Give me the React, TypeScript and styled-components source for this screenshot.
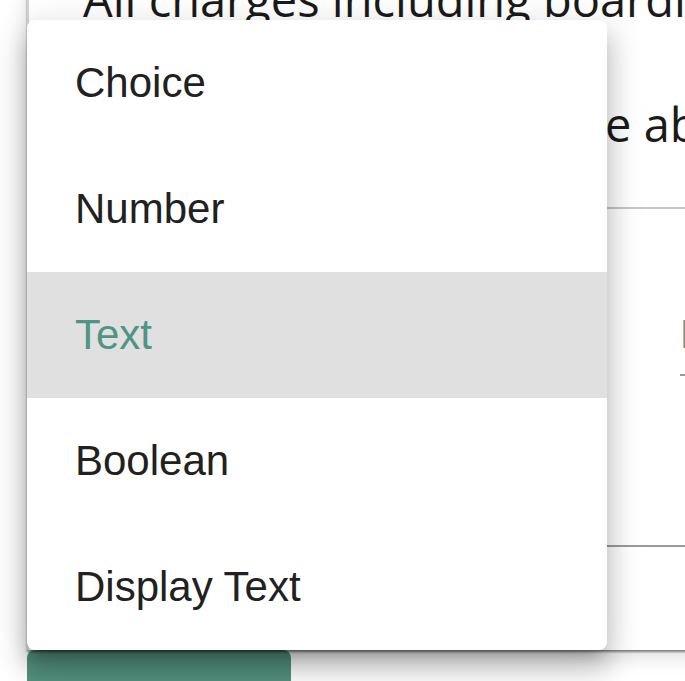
import React from "react";
import styled, { createGlobalStyle } from "styled-components";

const GlobalStyle = createGlobalStyle`
  html, body {
    margin: 0;
    padding: 0;
    background: #ffffff;
    overflow: hidden;
  }
  * { box-sizing: border-box; }
`;

const Page = styled.div`
  position: relative;
  width: 685px;
  height: 681px;
  overflow: hidden;
  background: #ffffff;
  font-family: "Liberation Sans", Arial, sans-serif;
`;

const Card = styled.section`
  position: relative;
  z-index: 1;
  margin: -63px 0 0 27px;
  width: 720px;
  padding-bottom: 103px;
  background: #ffffff;
  border-left: 2px solid #d2d2d2;
  box-shadow: 0 2px 2px rgba(0, 0, 0, 0.45), 0 8px 18px rgba(0, 0, 0, 0.12);
`;

const Notes = styled.div`
  padding-left: 54px;
  font-family: "Open Sans", "Noto Sans", sans-serif;
  font-size: 47px;
  line-height: 125px;
  color: #1a1a1a;
  white-space: nowrap;
`;

const NoteLine = styled.p`
  margin: 0;
`;

const Field = styled.div`
  margin-top: 20px;
  height: 340px;
  padding: 101px 0 0 651px;
  border-top: 2px solid #c6c6c6;
  border-bottom: 2px solid #9a9a9a;
`;

const FieldLabel = styled.div`
  font-size: 41px;
  line-height: 48px;
  color: #8a8a8a;
  white-space: nowrap;
`;

const FieldUnderline = styled.div`
  margin-top: 16px;
  width: 60px;
  height: 2px;
  background: #9a9a9a;
`;

const Actions = styled.div`
  display: flex;
  padding-left: 27px;
`;

const PrimaryButton = styled.button`
  width: 264px;
  height: 60px;
  border: none;
  border-radius: 8px;
  background: #54917f;
`;

const Menu = styled.ul`
  position: absolute;
  z-index: 10;
  left: 27px;
  top: 20px;
  width: 580px;
  margin: 0;
  padding: 0;
  list-style: none;
  background: #ffffff;
  border-radius: 8px;
  overflow: hidden;
  box-shadow: 0 12px 12px -8px rgba(0, 0, 0, 0.2),
    0 20px 25px 3px rgba(0, 0, 0, 0.14), 0 8px 35px 5px rgba(0, 0, 0, 0.12);
`;

const MenuItem = styled.li<{ $selected?: boolean }>`
  display: flex;
  align-items: center;
  height: 126px;
  padding-left: 48px;
  font-family: "Liberation Sans", Arial, sans-serif;
  font-size: 42px;
  color: ${(p) => (p.$selected ? "#4f9484" : "#212121")};
  background: ${(p) => (p.$selected ? "#e0e0e0" : "transparent")};
`;

const options = ["Choice", "Number", "Text", "Boolean", "Display Text"];

export default function App() {
  return (
    <Page>
      <GlobalStyle />
      <Card>
        <Notes>
          <NoteLine>All charges including boarding are payable in advance.</NoteLine>
          <NoteLine>Charges are stated in the above table.</NoteLine>
        </Notes>
        <Field>
          <FieldLabel>Prompt</FieldLabel>
          <FieldUnderline />
        </Field>
      </Card>
      <Actions>
        <PrimaryButton type="button" aria-label="Save" />
      </Actions>
      <Menu role="listbox">
        {options.map((o) => (
          <MenuItem key={o} role="option" $selected={o === "Text"}>
            {o}
          </MenuItem>
        ))}
      </Menu>
    </Page>
  );
}
